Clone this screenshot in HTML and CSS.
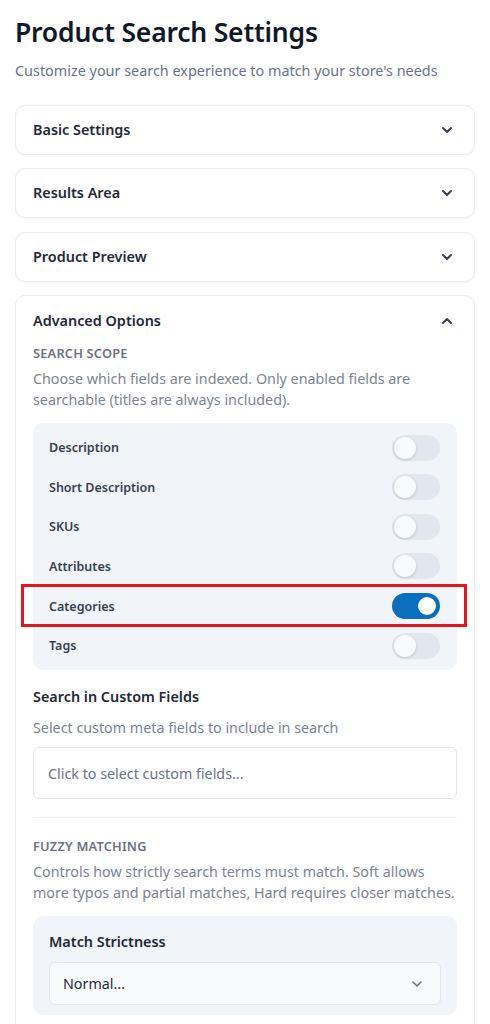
FILE: index.html
```html
<!DOCTYPE html>
<html lang="en">
<head>
<meta charset="utf-8">
<title>Product Search Settings</title>
<link rel="stylesheet" href="styles.css">
</head>
<body>
<div class="page">
  <h1 class="title">Product Search Settings</h1>
  <p class="subtitle">Customize your search experience to match your store's needs</p>

  <div class="card">
    <div class="card-head"><span class="card-title">Basic Settings</span>
      <svg class="chev" viewBox="0 0 12 8" width="12" height="8"><path d="M2 2l4 4 4-4" fill="none" stroke="currentColor" stroke-width="2" stroke-linecap="round" stroke-linejoin="round"/></svg>
    </div>
  </div>
  <div class="card">
    <div class="card-head"><span class="card-title">Results Area</span>
      <svg class="chev" viewBox="0 0 12 8" width="12" height="8"><path d="M2 2l4 4 4-4" fill="none" stroke="currentColor" stroke-width="2" stroke-linecap="round" stroke-linejoin="round"/></svg>
    </div>
  </div>
  <div class="card">
    <div class="card-head"><span class="card-title">Product Preview</span>
      <svg class="chev" viewBox="0 0 12 8" width="12" height="8"><path d="M2 2l4 4 4-4" fill="none" stroke="currentColor" stroke-width="2" stroke-linecap="round" stroke-linejoin="round"/></svg>
    </div>
  </div>

  <div class="card card-open">
    <div class="card-head"><span class="card-title">Advanced Options</span>
      <svg class="chev" viewBox="0 0 12 8" width="12" height="8"><path d="M2 6l4-4 4 4" fill="none" stroke="currentColor" stroke-width="2" stroke-linecap="round" stroke-linejoin="round"/></svg>
    </div>
    <div class="card-body">
      <div class="section-label">SEARCH SCOPE</div>
      <p class="section-desc">Choose which fields are indexed. Only enabled fields are searchable (titles are always included).</p>

      <div class="panel toggles">
        <div class="row"><span class="row-label">Description</span><span class="toggle"><span class="knob"></span></span></div>
        <div class="row"><span class="row-label">Short Description</span><span class="toggle"><span class="knob"></span></span></div>
        <div class="row"><span class="row-label">SKUs</span><span class="toggle"><span class="knob"></span></span></div>
        <div class="row"><span class="row-label">Attributes</span><span class="toggle"><span class="knob"></span></span></div>
        <div class="row row-marked"><span class="row-label">Categories</span><span class="toggle on"><span class="knob"></span></span><span class="mark"></span></div>
        <div class="row"><span class="row-label">Tags</span><span class="toggle"><span class="knob"></span></span></div>
      </div>

      <div class="field-title">Search in Custom Fields</div>
      <p class="field-desc">Select custom meta fields to include in search</p>
      <div class="input">Click to select custom fields...</div>

      <hr class="divider">

      <div class="section-label">FUZZY MATCHING</div>
      <p class="section-desc">Controls how strictly search terms must match. Soft allows more typos and partial matches, Hard requires closer matches.</p>

      <div class="panel strict">
        <div class="field-title tight">Match Strictness</div>
        <div class="select"><span>Normal...</span>
          <svg class="chev chev-sm" viewBox="0 0 12 8" width="12" height="8"><path d="M2 2l4 4 4-4" fill="none" stroke="currentColor" stroke-width="1.6" stroke-linecap="round" stroke-linejoin="round"/></svg>
        </div>
      </div>
    </div>
  </div>
</div>
</body>
</html>
```

FILE: styles.css
```css
* { box-sizing: border-box; }
html, body { margin: 0; padding: 0; background: #ffffff; }
body {
  font-family: "Noto Sans", "Open Sans", sans-serif;
  color: #1f2937;
}
.page {
  padding: 14px 15px 40px;
  overflow: hidden;
  height: 1024px;
}
.title {
  margin: 0;
  font-size: 26.5px;
  line-height: 36px;
  font-weight: 600;
  color: #111827;
  letter-spacing: -0.2px;
}
.subtitle {
  margin: 11px 0 24px;
  font-size: 14.4px;
  line-height: 20px;
  color: #6b7280;
}
.card {
  border: 1px solid #e8ebef;
  border-radius: 10px;
  background: #fff;
  box-shadow: 0 1px 2px rgba(16, 24, 40, 0.04);
  margin-bottom: 13.3px;
}
.card-head {
  display: flex;
  align-items: center;
  justify-content: space-between;
  padding: 14px 21px 14px 17px;
  height: 48px;
}
.card-title {
  font-size: 14.4px;
  line-height: 20px;
  font-weight: 600;
  color: #1f2937;
}
.card-open .card-head { padding: 15px 21px 13px 17px; }
.chev { color: #374151; display: block; }
.card-body { padding: 0 17px 40px; }
.section-label {
  font-size: 12.8px;
  line-height: 18px;
  font-weight: 600;
  color: #6b7280;
  letter-spacing: 0.2px;
}
.section-desc {
  margin: 6px 0 0;
  font-size: 14.3px;
  line-height: 21px;
  color: #7c838f;
}
.panel {
  background: #f1f4f8;
  border-radius: 10px;
  margin-top: 13px;
}
.toggles { padding: 5px 17px 5px 16px; }
.row {
  position: relative;
  display: flex;
  align-items: center;
  justify-content: space-between;
  height: 39.6px;
}
.row-label {
  font-size: 12.5px;
  font-weight: 600;
  color: #374151;
}
.toggle {
  position: relative;
  width: 48px;
  height: 26px;
  border-radius: 13px;
  background: #e2e7ef;
}
.knob {
  position: absolute;
  top: 2px;
  left: 2px;
  width: 22px;
  height: 22px;
  border-radius: 50%;
  background: #f9fafc;
  box-shadow: 0 1px 3px rgba(15, 23, 42, 0.18);
}
.toggle.on { background: #0b6ebf; }
.toggle.on .knob {
  left: 24px;
  background: #fff;
  border: 2px solid #0b6ebf;
  box-shadow: none;
}
.mark {
  position: absolute;
  left: -28px;
  right: -27px;
  top: -2px;
  bottom: -1px;
  border: 3px solid #e3171f;
  pointer-events: none;
}
.field-title {
  margin-top: 17px;
  font-size: 14.4px;
  line-height: 20px;
  font-weight: 600;
  color: #1f2937;
}
.field-title.tight { margin-top: 0; }
.field-desc {
  margin: 11px 0 0;
  font-size: 14.3px;
  line-height: 20px;
  color: #7c838f;
}
.input {
  margin-top: 9px;
  height: 52px;
  border: 1px solid #e3e7ed;
  border-radius: 6px;
  background: #fff;
  display: flex;
  align-items: center;
  padding: 0 14px;
  font-size: 14.3px;
  color: #6b7280;
}
.divider {
  margin: 18px 0 19px;
  border: 0;
  border-top: 1px solid #eef0f3;
  height: 0;
}
.strict { padding: 16px 16px 10px; }
.select {
  margin-top: 10px;
  height: 43px;
  border: 1px solid #e3e7ed;
  border-radius: 6px;
  background: #f9fafc;
  display: flex;
  align-items: center;
  justify-content: space-between;
  padding: 0 17px 0 13px;
  font-size: 14.3px;
  color: #1f2937;
}
.chev-sm { color: #6b7280; }
```
